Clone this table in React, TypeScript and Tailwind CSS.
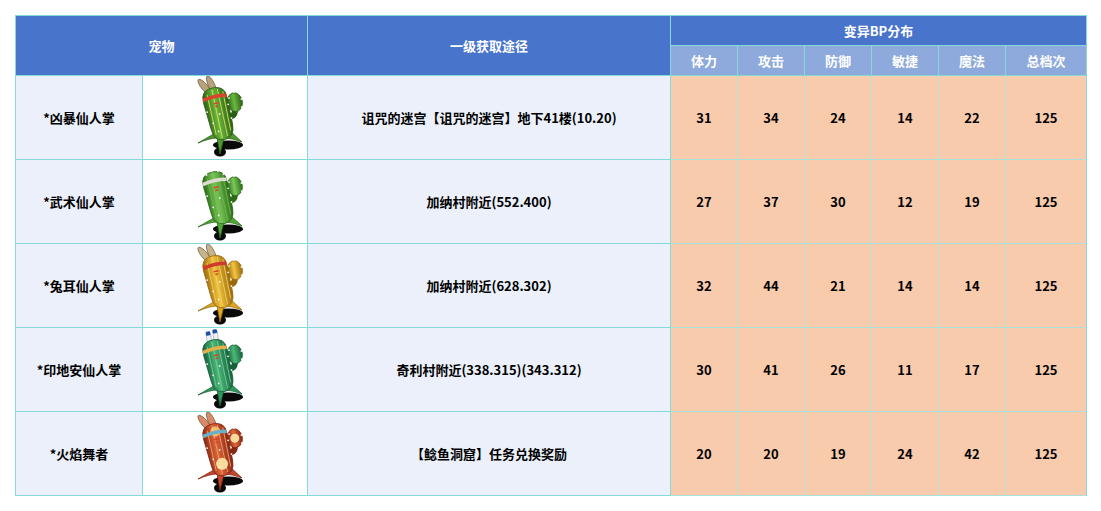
type CactusProps = {
  id: string;
  body: string;
  dark: string;
  light: string;
  stripe: string;
  band: string;
  top: "ears" | "spikes" | "feathers";
  ear?: string;
  glow?: boolean;
};

function Cactus({ id, body, dark, light, stripe, band, top, ear = "#b9a27a", glow }: CactusProps) {
  return (
    <svg width="62" height="84" viewBox="0 0 62 84">
      <defs>
        <linearGradient id={id} x1="0" y1="0" x2="1" y2="0">
          <stop offset="0" stopColor={dark} />
          <stop offset="0.45" stopColor={light} />
          <stop offset="1" stopColor={dark} />
        </linearGradient>
      </defs>
      {/* shadow */}
      <ellipse cx="38" cy="69" rx="15" ry="4.5" fill="#0a0a0a" />
      <ellipse cx="30" cy="76" rx="6" ry="4.5" fill="#0a0a0a" />
      {/* feet */}
      <path
        d="M29 55 L8 67 Q20 62 27 62 L30 78 L34 62 Q42 62 52 66 L40 55 Z"
        fill={body}
        stroke={dark}
        strokeWidth="0.8"
      />
      <g transform="rotate(-10 30 40)">
        {top === "ears" && (
          <g stroke="#5a4a30" strokeWidth="0.6">
            <ellipse cx="20" cy="9" rx="3.2" ry="10" transform="rotate(-30 20 9)" fill={ear} />
            <ellipse cx="27" cy="8" rx="3.2" ry="10" transform="rotate(-15 27 8)" fill={ear} />
          </g>
        )}
        {top === "feathers" && (
          <g stroke="#9aa4b0" strokeWidth="0.6">
            <rect x="22" y="3" width="4.5" height="13" rx="2" fill="#eef0f2" />
            <rect x="29" y="2" width="4.5" height="13" rx="2" fill="#eef0f2" />
            <rect x="22" y="2" width="4.5" height="4" rx="1" fill="#1f4fa6" stroke="none" />
            <rect x="29" y="1" width="4.5" height="4" rx="1" fill="#1f4fa6" stroke="none" />
          </g>
        )}
        {/* arm */}
        <path d="M37 42 Q46 44 46 34" stroke={dark} strokeWidth="6" fill="none" />
        <ellipse cx="47" cy="29" rx="7.5" ry="9.5" fill={`url(#${id})`} stroke={dark} strokeWidth="0.8" />
        {/* body */}
        <path
          d="M16 24 Q15 11 28 11 Q40 11 40 22 L41 50 Q41 64 30 64 Q20 64 19 52 Z"
          fill={`url(#${id})`}
          stroke={dark}
          strokeWidth="0.8"
        />
        <g stroke={stripe} strokeWidth="1" opacity="0.9">
          <line x1="21" y1="17" x2="23" y2="58" />
          <line x1="26.5" y1="13" x2="28.5" y2="62" />
          <line x1="32" y1="13" x2="34" y2="61" />
          <line x1="37" y1="16" x2="38" y2="56" />
        </g>
        {glow && (
          <g>
            <circle cx="30" cy="52" r="6" fill="#ffe9a8" opacity="0.9" />
            <circle cx="29" cy="19" r="5" fill="#ffd27a" opacity="0.8" />
            <circle cx="47" cy="29" r="4.5" fill="#ffe9a8" opacity="0.9" />
          </g>
        )}
        {top === "spikes" && (
          <g fill="#f4f4f4">
            <circle cx="21" cy="13" r="1" />
            <circle cx="27" cy="10" r="1" />
            <circle cx="33" cy="11" r="1" />
            <circle cx="38" cy="15" r="1" />
          </g>
        )}
        {/* headband */}
        <path d="M16 20 Q28 17 40 19 L40 22.5 Q28 20.5 16 23.5 Z" fill={band} />
        <rect x="26" y="26" width="5" height="1.5" fill="#d9442b" />
        <rect x="27" y="29" width="3" height="1.5" fill="#d9442b" />
        {/* spines */}
        <g fill="#f4f4f4">
          <circle cx="18" cy="34" r="0.9" />
          <circle cx="40" cy="30" r="0.9" />
          <circle cx="22" cy="46" r="0.9" />
          <circle cx="41" cy="44" r="0.9" />
          <circle cx="30" cy="38" r="0.9" />
          <circle cx="54" cy="27" r="0.9" />
          <circle cx="48" cy="19" r="0.9" />
          <circle cx="42" cy="24" r="0.9" />
          <circle cx="53" cy="35" r="0.9" />
          <circle cx="26" cy="55" r="0.9" />
        </g>
      </g>
    </svg>
  );
}

const rows = [
  {
    name: "*凶暴仙人掌",
    route: "诅咒的迷宫【诅咒的迷宫】地下41楼(10.20)",
    stats: [31, 34, 24, 14, 22, 125],
    cactus: (
      <Cactus id="c1" body="#4e9a2e" dark="#2a5e16" light="#6cb83e" stripe="#d9e35a" band="#d9442b" top="ears" />
    ),
  },
  {
    name: "*武术仙人掌",
    route: "加纳村附近(552.400)",
    stats: [27, 37, 30, 12, 19, 125],
    cactus: (
      <Cactus id="c2" body="#52a83a" dark="#2a6a18" light="#7cc85a" stripe="#6cbc48" band="#e0dcd2" top="spikes" />
    ),
  },
  {
    name: "*兔耳仙人掌",
    route: "加纳村附近(628.302)",
    stats: [32, 44, 21, 14, 14, 125],
    cactus: (
      <Cactus
        id="c3"
        body="#e0a81e"
        dark="#9a680c"
        light="#f2c440"
        stripe="#f5d05a"
        band="#cf3a2c"
        top="ears"
        ear="#c9b48a"
      />
    ),
  },
  {
    name: "*印地安仙人掌",
    route: "奇利村附近(338.315)(343.312)",
    stats: [30, 41, 26, 11, 17, 125],
    cactus: (
      <Cactus id="c4" body="#2f9a5c" dark="#17603a" light="#4cb878" stripe="#6fd0a0" band="#e6b04a" top="feathers" />
    ),
  },
  {
    name: "*火焰舞者",
    route: "【鲶鱼洞窟】任务兑换奖励",
    stats: [20, 20, 19, 24, 42, 125],
    cactus: (
      <Cactus
        id="c5"
        body="#c8442a"
        dark="#842614"
        light="#e0663a"
        stripe="#f2a26a"
        band="#6ab0c8"
        top="ears"
        ear="#d98a6a"
        glow
      />
    ),
  },
];

const statHeads = ["体力", "攻击", "防御", "敏捷", "魔法", "总档次"];

export default function App() {
  return (
    <div
      className="bg-white w-[1101px] h-[511px] pt-[15px] pl-[15px]"
      style={{ fontFamily: '"Noto Sans CJK SC", "Noto Sans", sans-serif' }}
    >
      <table className="border-collapse table-fixed w-[1071px] text-[13px] font-bold">
        <colgroup>
          <col className="w-[127px]" />
          <col className="w-[165px]" />
          <col className="w-[363px]" />
          <col className="w-[67px]" />
          <col className="w-[67px]" />
          <col className="w-[67px]" />
          <col className="w-[67px]" />
          <col className="w-[67px]" />
          <col className="w-[81px]" />
        </colgroup>
        <thead>
          <tr className="h-[30px]">
            <th colSpan={2} rowSpan={2} className="bg-[#4874cb] text-white border border-[#83dad6] font-bold">
              宠物
            </th>
            <th rowSpan={2} className="bg-[#4874cb] text-white border border-[#83dad6] font-bold">
              一级获取途径
            </th>
            <th colSpan={6} className="bg-[#4874cb] text-white border border-[#83dad6] font-bold">
              变异BP分布
            </th>
          </tr>
          <tr className="h-[30px]">
            {statHeads.map((h) => (
              <th key={h} className="bg-[#8eaadc] text-white border border-[#83dad6] font-bold">
                {h}
              </th>
            ))}
          </tr>
        </thead>
        <tbody>
          {rows.map((r) => (
            <tr key={r.name} className="h-[84px]">
              <td className="bg-[#ebf0fa] border border-[#83dad6] text-center text-black">{r.name}</td>
              <td className="bg-white border border-[#83dad6] p-0">
                <div className="flex justify-center items-center h-[83px] pr-[8px]">{r.cactus}</div>
              </td>
              <td className="bg-[#ebf0fa] border border-[#83dad6] text-center text-black">{r.route}</td>
              {r.stats.map((s, i) => (
                <td
                  key={i}
                  className={
                    "bg-[#f8cbad] text-center text-black border-y border-y-[#a8e2d8] " +
                    (i === 0 ? "border-l border-l-[#83dad6] " : "border-l border-l-[#b8e4d6] ") +
                    (i === 5 ? "border-r border-r-[#83dad6]" : "")
                  }
                >
                  {s}
                </td>
              ))}
            </tr>
          ))}
        </tbody>
      </table>
    </div>
  );
}
